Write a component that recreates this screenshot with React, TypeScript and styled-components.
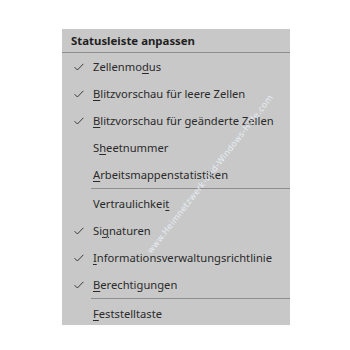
import React from "react";
import styled, { createGlobalStyle } from "styled-components";

const GlobalStyle = createGlobalStyle`
  html, body {
    margin: 0;
    padding: 0;
    background: #ffffff;
  }
`;

const Page = styled.div`
  width: 350px;
  height: 350px;
  padding: 29px 0 0 62px;
  box-sizing: border-box;
`;

const Menu = styled.div`
  position: relative;
  width: 228px;
  height: 296px;
  overflow: hidden;
  background-color: #c8c8c8;
  font-family: "Noto Sans", "Open Sans", sans-serif;
  font-size: 11.2px;
  color: #2a2a2a;
`;

const Header = styled.div`
  height: 23px;
  display: flex;
  align-items: center;
  padding-left: 9px;
  font-weight: bold;
  font-size: 11.4px;
  color: #1f1f1f;
  border-bottom: 1px solid #8e8e8e;
`;

const Item = styled.div`
  height: 27px;
  display: flex;
  align-items: center;
`;

const CheckCell = styled.div`
  width: 31px;
  display: flex;
  justify-content: center;
  align-items: center;
  padding-left: 2px;
  box-sizing: border-box;
`;

const Label = styled.span`
  white-space: nowrap;
`;

const Key = styled.span`
  text-decoration: underline;
  text-underline-offset: 2px;
  text-decoration-thickness: 1px;
`;

const Separator = styled.div`
  height: 2px;
  margin-left: 29px;
  border-top: 1px solid #8e8e8e;
  box-sizing: border-box;
`;

const Watermark = styled.span`
  position: absolute;
  left: 38px;
  top: 140px;
  width: 220px;
  text-align: center;
  transform: rotate(-52deg);
  font-family: "DejaVu Sans", sans-serif;
  font-size: 8.5px;
  letter-spacing: 0.3px;
  color: #eef6ff;
  opacity: 0.8;
  white-space: nowrap;
  pointer-events: none;
`;

function Check() {
  return (
    <svg width="10" height="8" viewBox="0 0 10 8">
      <path d="M0.6 4.2 L3.4 7 L9.4 0.8" fill="none" stroke="#3a3a3a" strokeWidth="1" />
    </svg>
  );
}

type Entry = { pre: string; key: string; post: string; checked: boolean } | "sep";

const entries: Entry[] = [
  { pre: "Zellenmo", key: "d", post: "us", checked: true },
  { pre: "", key: "B", post: "litzvorschau für leere Zellen", checked: true },
  { pre: "", key: "B", post: "litzvorschau für geänderte Zellen", checked: true },
  { pre: "S", key: "h", post: "eetnummer", checked: false },
  { pre: "", key: "A", post: "rbeitsmappenstatistiken", checked: false },
  "sep",
  { pre: "Vertraulichkei", key: "t", post: "", checked: false },
  { pre: "Si", key: "g", post: "naturen", checked: true },
  { pre: "", key: "I", post: "nformationsverwaltungsrichtlinie", checked: true },
  { pre: "", key: "B", post: "erechtigungen", checked: true },
  "sep",
  { pre: "", key: "F", post: "eststelltaste", checked: false },
];

export default function App() {
  return (
    <>
      <GlobalStyle />
      <Page>
        <Menu>
          <Header>Statusleiste anpassen</Header>
          {entries.map((e, i) =>
            e === "sep" ? (
              <Separator key={i} />
            ) : (
              <Item key={i}>
                <CheckCell>{e.checked && <Check />}</CheckCell>
                <Label>
                  {e.pre}
                  <Key>{e.key}</Key>
                  {e.post}
                </Label>
              </Item>
            )
          )}
          <Watermark>www.Heimnetzwerk-und-Windows-Hilfe.com</Watermark>
        </Menu>
      </Page>
    </>
  );
}
